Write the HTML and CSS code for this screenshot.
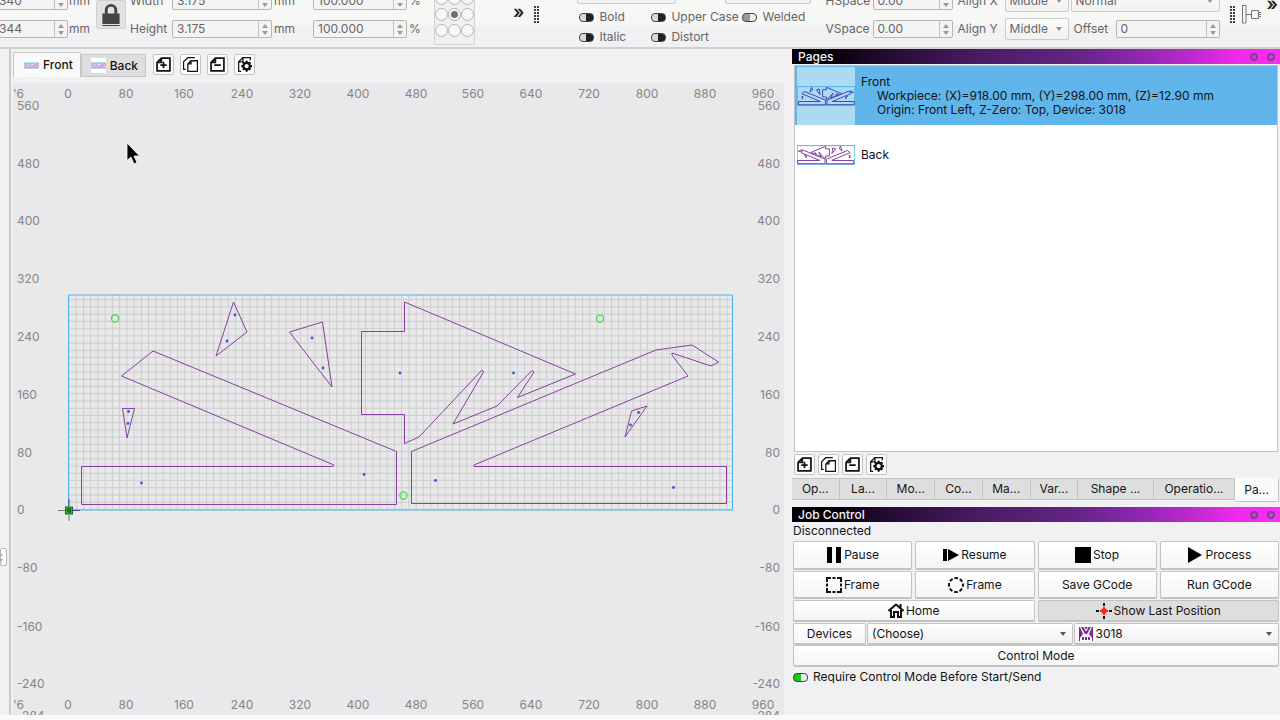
FILE: index.html
```html
<!DOCTYPE html>
<html lang="en">
<head>
<meta charset="utf-8">
<title>Carving workspace</title>
<link rel="stylesheet" href="styles.css">
</head>
<body>
<svg class="defs" aria-hidden="true">
  <symbol id="sheet" viewBox="66 293 669 220">
    <rect class="sheet-edge" x="68.5" y="295" width="664" height="215"/>
    <g class="cuts">
      <path d="M153 351L396.500 451.500V504.500H81.500V466.500H333L334 465L121.500 376Z"/>
      <path d="M233.500 302L247 332L216 356Z"/>
      <path d="M289.500 332L322.500 322L332 387Z"/>
      <path d="M122.500 408.500H134.500L127 438Z"/>
      <path d="M404.500 302L575.500 374L517.500 397.500L534 372L532 370.500L497 406L453 424L483.500 372L482 370L419 437L404.500 443.500V414.500H361.500V331.500H404.500Z"/>
      <path d="M411.500 451.500L656 350L692 345L718.500 362L711 366L672 353V355L688 376L474 465V466.500H726.500V503.500H411.500Z"/>
      <path d="M631.500 411L647 406L625 437Z"/>
    </g>
  </symbol>
  <symbol id="i-add" viewBox="0 0 14 14"><path class="ln mid-ln" d="M5 1H13V13H1V5ZM5 1V5H1M7 4.500V10.500M4 7.500H10"/></symbol>
  <symbol id="i-copy" viewBox="0 0 14 14"><path class="ln thin" d="M7.500 3.500H13.500V13.500H4.500V6.500ZM7.500 3.500V6.500H4.500M11 .5H4.500L.5 4.500V11.500H2.500"/></symbol>
  <symbol id="i-remove" viewBox="0 0 14 14"><path class="ln mid-ln" d="M5 1H13V13H1V5ZM5 1V5H1M4 7.500H10"/></symbol>
  <symbol id="i-settings" viewBox="0 0 14 14"><path class="ln thin" d="M12.500 3V.5H5.500L1.500 4.500V13.500H4M5.500 .5V4.500H1.500"/><circle class="ln" cx="9" cy="8.500" r="3"/><path class="ln" d="M9 3.500V5M9 12V13.800M4 8.500H6M12 8.500H14M5.500 5L7 6.500M12.500 5L11 6.500M5.500 12L7 10.500M12.500 12L11 10.500"/></symbol>
</svg>

<header class="toolbar">
  <div class="fields position">
    <span class="spin"><input aria-label="X position" value="340"><i></i></span><span>mm</span>
    <span class="spin"><input aria-label="Y position" value="344"><i></i></span><span>mm</span>
  </div>
  <button class="lock" aria-label="Lock ratio"><svg viewBox="0 0 18 23"><path d="M0 10H18V21H0Z M0 22H18V23H0Z" fill="#444"/><path d="M4 11V6.500A5 5 0 0 1 14 6.500V11" fill="none" stroke="#444" stroke-width="3"/></svg></button>
  <div class="fields size">
    <label for="w">Width</label><span class="spin"><input id="w" value="3.175"><i></i></span><span>mm</span><span class="spin"><input aria-label="Width percent" value="100.000"><i></i></span><span>%</span>
    <label for="h">Height</label><span class="spin"><input id="h" value="3.175"><i></i></span><span>mm</span><span class="spin"><input aria-label="Height percent" value="100.000"><i></i></span><span>%</span>
  </div>
  <div class="anchor">
    <input type="radio" name="anchor" aria-label="Top left"><input type="radio" name="anchor" aria-label="Top"><input type="radio" name="anchor" aria-label="Top right">
    <input type="radio" name="anchor" aria-label="Left"><input type="radio" name="anchor" aria-label="Centre" checked><input type="radio" name="anchor" aria-label="Right">
    <input type="radio" name="anchor" aria-label="Bottom left"><input type="radio" name="anchor" aria-label="Bottom"><input type="radio" name="anchor" aria-label="Bottom right">
  </div>
  <button class="more more-first" aria-label="More tools">»</button>
  <span class="grip"></span>
  <div class="text-tools">
    <div class="font-row"><span class="pick font"><select aria-label="Font"><option></option></select></span><span class="pick align"><select aria-label="Alignment"><option></option></select></span></div>
    <div class="switches">
      <label><input type="checkbox" class="switch">Bold</label><label><input type="checkbox" class="switch">Upper Case</label><label><input type="checkbox" class="switch" checked>Welded</label>
      <label><input type="checkbox" class="switch">Italic</label><label><input type="checkbox" class="switch">Distort</label>
    </div>
  </div>
  <div class="fields spacing">
    <label for="hs">HSpace</label><span class="spin"><input id="hs" value="0.00"><i></i></span><label for="ax">Align X</label><span class="pick"><select id="ax"><option>Middle</option></select></span><span class="pick wide"><select aria-label="Mode"><option>Normal</option></select></span>
    <label for="vs">VSpace</label><span class="spin"><input id="vs" value="0.00"><i></i></span><label for="ay">Align Y</label><span class="pick"><select id="ay"><option>Middle</option></select></span><label for="off" class="off">Offset</label><span class="spin"><input id="off" value="0"><i></i></span>
  </div>
  <span class="grip"></span>
  <svg class="align-icon" viewBox="0 0 22 20"><path d="M1.500 1.500H5V19H1.500ZM10.500 6.500H17.500V14.500H10.500ZM5 10.500H10.500M17.500 8.500H20M17.500 10.500H20M17.500 12.500H20" fill="none" stroke="#777"/></svg>
  <button class="more more-last" aria-label="More alignment">»</button>
</header>

<main class="work">
  <aside class="edge"><span class="spin"><i></i></span></aside>
  <section class="editor">
    <nav class="page-tabs">
      <button class="tab current"><svg class="mini"><use href="#sheet"/></svg>Front</button>
      <button class="tab"><svg class="mini"><use href="#sheet"/></svg>Back</button>
      <div class="tools">
        <button class="tool" aria-label="Add page"><svg><use href="#i-add"/></svg></button>
        <button class="tool" aria-label="Copy page"><svg><use href="#i-copy"/></svg></button>
        <button class="tool" aria-label="Remove page"><svg><use href="#i-remove"/></svg></button>
        <button class="tool" aria-label="Page settings"><svg><use href="#i-settings"/></svg></button>
      </div>
    </nav>
    <div class="canvas">
      <svg viewBox="13 83 771 632">
        <defs><pattern id="grid" x="68.500" y="510" width="7.233" height="7.233" patternUnits="userSpaceOnUse"><path d="M0.500 0V7.233M0 6.700H7.233" stroke="#cdcdcc" stroke-width="1"/></pattern></defs>
        <g class="axis mid">
          <text x="68" y="98">0</text><text x="126" y="98">80</text><text x="184" y="98">160</text><text x="242" y="98">240</text><text x="300" y="98">320</text><text x="358" y="98">400</text><text x="416" y="98">480</text><text x="473" y="98">560</text><text x="531" y="98">640</text><text x="589" y="98">720</text><text x="647" y="98">800</text><text x="705" y="98">880</text><text x="763" y="98">960</text>
          <text x="68" y="709">0</text><text x="126" y="709">80</text><text x="184" y="709">160</text><text x="242" y="709">240</text><text x="300" y="709">320</text><text x="358" y="709">400</text><text x="416" y="709">480</text><text x="473" y="709">560</text><text x="531" y="709">640</text><text x="589" y="709">720</text><text x="647" y="709">800</text><text x="705" y="709">880</text><text x="763" y="709">960</text>
        </g>
        <g class="axis">
          <text x="13" y="98">'6</text><text x="13" y="709">'6</text>
          <text x="17" y="110">560</text><text x="17" y="168">480</text><text x="17" y="225">400</text><text x="17" y="283">320</text><text x="17" y="341">240</text><text x="17" y="399">160</text><text x="17" y="457">80</text><text x="17" y="514">0</text><text x="17" y="572">-80</text><text x="17" y="631">-160</text><text x="17" y="688">-240</text><text x="17" y="720">-284</text>
        </g>
        <g class="axis end">
          <text x="780" y="110">560</text><text x="780" y="168">480</text><text x="780" y="225">400</text><text x="780" y="283">320</text><text x="780" y="341">240</text><text x="780" y="399">160</text><text x="780" y="457">80</text><text x="780" y="514">0</text><text x="780" y="572">-80</text><text x="780" y="631">-160</text><text x="780" y="688">-240</text><text x="780" y="720">-284</text>
        </g>
        <rect x="68.500" y="295" width="664" height="215" fill="url(#grid)"/>
        <use href="#sheet" x="66" y="293" width="669" height="220"/>
        <g fill="#3b55d9">
          <circle cx="235" cy="315" r="1.400"/><circle cx="227" cy="341" r="1.400"/><circle cx="312" cy="338" r="1.400"/><circle cx="323" cy="368" r="1.400"/><circle cx="128.500" cy="411.500" r="1.400"/><circle cx="128" cy="423.500" r="1.400"/><circle cx="141.500" cy="483" r="1.400"/><circle cx="364" cy="474.500" r="1.400"/><circle cx="400" cy="373" r="1.400"/><circle cx="513.500" cy="373" r="1.400"/><circle cx="435.500" cy="480.500" r="1.400"/><circle cx="673.500" cy="487.500" r="1.400"/><circle cx="638.500" cy="412.500" r="1.400"/><circle cx="630.500" cy="425" r="1.400"/>
        </g>
        <g fill="none" stroke="#3bdc48" stroke-width="1.200"><circle cx="115" cy="318.500" r="3.600"/><circle cx="600" cy="318.500" r="3.600"/><circle cx="403.500" cy="495.500" r="3.600"/></g>
        <path d="M58 510.500H65M69 515V521" stroke="#777"/><path d="M73 510.500H80M69 499V506" stroke="#4544a4"/>
        <rect x="65.500" y="507" width="7" height="7" fill="#37b43c" stroke="#176a22"/><rect x="67.500" y="509" width="3" height="3" fill="#38783b" stroke="#135d1e"/>
        <path d="M127 143V160.500L131 157L134 164L137 162.500L134 156H139.500Z" fill="#000" stroke="#fff" stroke-width="0.800"/>
      </svg>
    </div>
  </section>

  <aside class="docks">
    <section class="dock pages">
      <h2 class="title">Pages<span class="dots"><i></i><i></i></span></h2>
      <ul class="list">
        <li class="chosen"><span class="thumb"><svg><use href="#sheet"/></svg></span><div>Front<p>Workpiece: (X)=918.00 mm, (Y)=298.00 mm, (Z)=12.90 mm</p><p>Origin: Front Left, Z-Zero: Top, Device: 3018</p></div></li>
        <li><span class="thumb flip"><svg><use href="#sheet"/></svg></span><div>Back</div></li>
      </ul>
      <div class="tools">
        <button class="tool" aria-label="Add page"><svg><use href="#i-add"/></svg></button>
        <button class="tool" aria-label="Copy page"><svg><use href="#i-copy"/></svg></button>
        <button class="tool" aria-label="Remove page"><svg><use href="#i-remove"/></svg></button>
        <button class="tool" aria-label="Page settings"><svg><use href="#i-settings"/></svg></button>
      </div>
      <nav class="dock-tabs"><button>Op...</button><button>La...</button><button>Mo...</button><button>Co...</button><button>Ma...</button><button>Var...</button><button>Shape ...</button><button>Operatio...</button><button class="current">Pa...</button></nav>
    </section>
    <section class="dock job">
      <h2 class="title">Job Control<span class="dots"><i></i><i></i></span></h2>
      <p class="status">Disconnected</p>
      <div class="actions">
        <button class="btn"><svg viewBox="0 0 16 16"><path d="M1 0H6V16H1ZM10 0H15V16H10Z"/></svg>Pause</button>
        <button class="btn"><svg viewBox="0 0 16 16"><path d="M0 2H4V14H0ZM5 2L16 8L5 14Z"/></svg>Resume</button>
        <button class="btn"><svg viewBox="0 0 16 16"><path d="M0 0H16V16H0Z"/></svg>Stop</button>
        <button class="btn"><svg viewBox="0 0 16 16"><path d="M0 0L14 8L0 16Z"/></svg>Process</button>
        <button class="btn"><svg viewBox="0 0 16 16"><path class="ln" d="M1 5V1H5M6.500 1H9.500M11 1H15V5M15 11V15H11M9.500 15H6.500M5 15H1V11M1 9.500V6.500M15 6.500V9.500"/></svg>Frame</button>
        <button class="btn"><svg viewBox="0 0 16 16"><circle class="ln" cx="8" cy="8" r="7" stroke-dasharray="3.600 1.900" stroke-dashoffset="1.800"/></svg>Frame</button>
        <button class="btn">Save GCode</button>
        <button class="btn">Run GCode</button>
        <button class="btn half"><svg viewBox="0 0 16 16"><path class="ln" d="M0.500 8L8 1.500L15.500 8M3 7V14H6V9H10V14H13V7M12.500 1V5"/></svg>Home</button>
        <button class="btn half pressed"><svg viewBox="0 0 16 16"><path class="ln" d="M8 0V3M8 13V16M0 8H3M13 8H16"/><path d="M7 4H9V7H12V9H9V12H7V9H4V7H7Z" fill="#f22"/><circle cx="8" cy="8" r="2.800" fill="#f22"/></svg>Show Last Position</button>
      </div>
      <div class="devices">
        <button class="btn">Devices</button>
        <span class="pick"><select aria-label="Port"><option>(Choose)</option></select></span>
        <span class="pick machine"><select aria-label="Device"><option>3018</option></select><svg viewBox="0 0 14 14"><path d="M0 0H14V14H0Z" fill="#7d2896"/><path d="M1 0L4 7L1 11V14H13V11L10 7L13 0H12L8 7H6L2 0Z" fill="#fff"/><path d="M5 0L7 4L9 0" fill="none" stroke="#fff"/><path d="M3 11.500H11" stroke="#7d2896" stroke-width="3" stroke-dasharray="2 1"/></svg></span>
      </div>
      <button class="btn control">Control Mode</button>
      <label class="require"><input type="checkbox" class="switch go" checked>Require Control Mode Before Start/Send</label>
    </section>
  </aside>
</main>
</body>
</html>
```
FILE: styles.css
```css
* { box-sizing: border-box; }
body { margin: 0; height: 100vh; display: flex; flex-direction: column; overflow: hidden; background: #f1f1f3; color: #141414; font: 12px/14px Inter, "Liberation Sans", sans-serif; }
button, input, select { font: inherit; color: inherit; margin: 0; padding: 0; border: 0; background: none; border-radius: 0; }
h2, p, ul { margin: 0; padding: 0; font-weight: 400; }
svg { display: block; }
.defs { width: 0; height: 0; position: absolute; }
.ln { fill: none; stroke: #111; stroke-width: 2; }
.mid-ln { stroke-width: 1.6; }
.thin { stroke-width: 1.2; }
.sheet-edge { fill: none; stroke: #49b4e8; vector-effect: non-scaling-stroke; }
.cuts path { fill: none; stroke: var(--cut, #86409f); vector-effect: non-scaling-stroke; }

.toolbar { flex: none; height: 49px; display: flex; align-items: flex-end; overflow: hidden; color: #666; background: linear-gradient(#f7f7f6 25px, #f1f1f3 25px); border-bottom: 2px solid #d0d0cf; white-space: nowrap; }
.fields { display: grid; align-items: center; grid-auto-rows: 22px; row-gap: 6px; padding-bottom: 7px; }
.position { grid-template-columns: 69px 27px; column-gap: 1px; margin-left: -1px; }
.size { grid-template-columns: 40px 100px 37px 94px 10px; column-gap: 2px; margin-left: 4px; }
.spacing { grid-template-columns: 46px 80px 48px 64px 43px 104px; column-gap: 2px; margin-left: auto; }
.spacing label { padding-left: 1px; }
.spacing label[for^="a"] { padding-left: 3px; }
.spacing .off { padding-left: 3px; }
.spin { display: flex; height: 18px; border: 1px solid #b5b5b5; border-radius: 2px; background: #f4f4f5; overflow: hidden; }
.spin input { flex: 1; min-width: 0; padding-left: 4px; }
.spin i { flex: none; width: 13px; border-left: 1px solid #c2c2c2; display: flex; flex-direction: column; align-items: center; justify-content: center; gap: 3px; }
.spin i::before, .spin i::after { content: ""; border: 3px solid transparent; border-top-width: 0; border-bottom: 4px solid #999; }
.spin i::after { border-bottom-width: 0; border-top: 4px solid #999; }
.position .spin input { padding-left: 0; text-indent: -1px; }
.lock { align-self: flex-start; width: 30px; height: 29px; flex: none; border: 1px solid #cfcfcf; border-radius: 2px; background: #e2e2e2; display: grid; place-items: center; }
.lock svg { width: 18px; height: 22px; }
.anchor { display: grid; grid-template-columns: repeat(3, 13px); gap: 3px 0; padding: 2px 0 7px; margin: 0 0 2px 15px; border: 1px solid #d5d5d5; background: #f0f0f0; }
.anchor input { appearance: none; width: 13px; height: 13px; border: 1px solid #b4b4b4; border-radius: 50%; background: #f7f7f7; }
.anchor input:checked { background: radial-gradient(circle, #707070 3px, #f7f7f7 4px); }
.more { align-self: flex-start; font-size: 18px; line-height: 20px; font-weight: 600; color: #222; flex: none; }
.more-first { margin: 2px 0 0 38px; }
.more-last { margin: -6px 2px 0 4px; }
.grip { flex: none; align-self: flex-start; width: 7px; height: 19px; margin: 5px 0 0 9px; background: linear-gradient(#f7f7f6 1px, transparent 1px) 0 0 / 3px 3px, linear-gradient(90deg, #f7f7f6 1px, transparent 1px) 0 0 / 3px 3px, #444; }
.text-tools { margin-left: 37px; }
.font-row { display: flex; gap: 49px; }
.font { width: 99px; }
.align { width: 86px; }
.switches { display: grid; grid-template-columns: 72px 91px 64px; grid-auto-rows: 20px; align-items: center; padding: 3px 0 0 2px; }
.switches label, .require { display: flex; align-items: center; gap: 5px; }
.switch { appearance: none; flex: none; width: 15px; height: 9px; border: 1px solid #444; border-radius: 4px; background: linear-gradient(90deg, #d8d8d8 6px, #222 6px); }
.switch:checked { background: linear-gradient(90deg, #999 7px, #eee 7px); }
.switch.go:checked { background: linear-gradient(90deg, #14c81e 7px, #eee 7px); }
.align-icon { flex: none; width: 22px; height: 20px; align-self: flex-start; margin: 4px 0 0 5px; }
.pick { display: flex; position: relative; height: 22px; min-width: 0; border: 1px solid #cbcbcb; border-radius: 2px; background: linear-gradient(#fdfdfd, #f1f1f1); }
.pick select { appearance: none; flex: 1; min-width: 0; padding-left: 4px; }
.pick::after { content: ""; position: absolute; right: 6px; top: 8px; border: 3px solid transparent; border-bottom-width: 0; border-top: 4px solid currentColor; opacity: .7; pointer-events: none; }
.wide { grid-column: span 2; }

.work { flex: 1; min-height: 0; display: grid; grid-template-columns: 13px minmax(0, 1fr) 488px; border-bottom: 5px solid #fafafa; }
.edge { border-right: 2px solid #cbcbcd; margin-right: 2px; padding-top: 499px; overflow: hidden; }
.edge .spin { width: 7px; direction: rtl; background: #fff; justify-content: flex-start; }
.editor { display: flex; flex-direction: column; padding: 3px 8px 0 0; min-width: 0; }
.page-tabs { height: 31px; flex: none; display: flex; align-items: flex-start; }
.tab { height: 23px; display: flex; align-items: center; gap: 4px; margin-top: 2px; padding: 0 7px 0 9px; background: #dedede; border: 1px solid #c6c6c6; font-weight: 500; }
.tab.current { height: 25px; margin-top: 0; padding-left: 10px; background: #f8f8f8; border-bottom: 0; border-radius: 2px 2px 0 0; }
.mini { width: 15px; height: 15px; background: #fff; --cut: #c9a6d6; }
.tools { display: flex; gap: 3px; }
.page-tabs .tools { gap: 6px; margin: 2px 0 0 7px; }
.tool { width: 21px; height: 21px; border: 1px solid #c2c2c2; border-radius: 2px; background: #fdfdfd; display: grid; place-items: center; }
.tool svg { width: 15px; height: 15px; }
.canvas { flex: 1; min-height: 0; background: #e9e9eb; }
.canvas > svg { width: 100%; height: 100%; }
.axis { fill: #858585; }
.mid { text-anchor: middle; }
.end { text-anchor: end; }

.docks { display: flex; flex-direction: column; min-width: 0; }
.pages { flex: 1; min-height: 0; display: flex; flex-direction: column; }
.title { flex: none; height: 15px; display: flex; justify-content: space-between; align-items: center; padding: 0 5px 0 6px; font-size: 12px; line-height: 15px; font-weight: 500; color: #f4f4f4; background: linear-gradient(90deg, #050008 8%, #210a2d 18%, #35134a 28%, #501d6b 42%, #632583 58%, #9127b5 72%, #bd29cc 82%, #ee2aeb 91%, #fa2df4); }
.dots { display: flex; gap: 9px; }
.dots i { width: 8px; height: 8px; border: 2px solid #79458a; border-radius: 50%; }
.list { flex: 1; min-height: 0; list-style: none; margin: 1px 2px 2px; border: 1px solid #c2c2c6; background: #fff; }
.list li { display: flex; align-items: center; gap: 6px; height: 59px; padding-left: 2px; }
.list li.chosen { background: #60b5eb; --cut: #3f49b8; }
.list p { padding-left: 16px; }
.thumb { width: 58px; height: 58px; display: grid; place-items: center; }
.thumb svg { width: 58px; height: 20px; }
.chosen .thumb { background: #addaf3; }
.flip svg { transform: scaleX(-1); }
.pages .tools { padding-left: 2px; }
.dock-tabs { display: flex; height: 26px; flex: none; margin: 2px 1px 4px 0; align-items: flex-start; }
.dock-tabs button { flex: 47 0 0; min-width: 0; height: 22px; margin-top: 1px; background: #dedede; border: 1px solid #c4c4c4; border-left-width: 0; }
.dock-tabs button:nth-child(7) { flex-grow: 75; }
.dock-tabs button:nth-child(8) { flex-grow: 81; }
.dock-tabs .current { flex-grow: 43; height: 24px; background: #fafafa; border-top-color: #fafafa; }
.job { flex: none; padding-bottom: 31px; }
.status { padding: 2px 0 2px 1px; height: 19px; }
.actions, .devices, .control, .require { margin-left: 1px; margin-right: 1px; }
.actions { display: grid; grid-template-columns: repeat(4, minmax(0, 1fr)); grid-template-rows: 29px 28px 22px; gap: 1px 3px; }
.btn { display: flex; align-items: center; justify-content: center; gap: 2px; border: 1px solid #c3c3c3; border-bottom-width: 2px; border-radius: 2px; background: linear-gradient(#fff, #f5f5f5); }
.btn svg { width: 16px; height: 16px; }
.half { grid-column: span 2; }
.pressed { background: #dedede; }
.devices { display: grid; grid-template-columns: 73px 1fr 1fr; grid-auto-rows: 22px; gap: 1px; margin-top: 1px; }
.devices .pick { border-color: #c3c3c3; border-bottom-width: 2px; }
.machine select { padding-left: 21px; }
.machine svg { position: absolute; left: 4px; top: 3px; width: 14px; height: 14px; pointer-events: none; }
.control { width: calc(100% - 2px); height: 22px; }
.require { padding-top: 3px; }
```
